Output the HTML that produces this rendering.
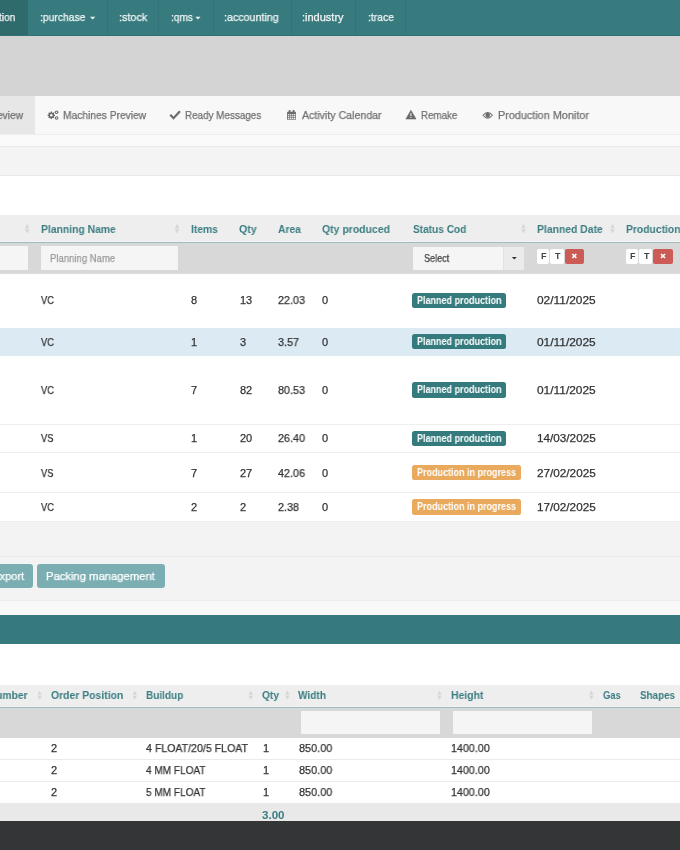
<!DOCTYPE html>
<html><head><meta charset="utf-8"><style>
html,body{margin:0;padding:0;width:680px;height:850px;overflow:hidden;background:#fff;}
.b{position:absolute;}
.t{position:absolute;font-family:"Liberation Sans",sans-serif;white-space:nowrap;will-change:transform;}
</style></head><body>
<div class=b style="left:0px;top:0px;width:680px;height:36px;background:#387b7f;"></div>
<div class=b style="left:0px;top:0px;width:28px;height:36px;background:#2f6a6d;"></div>
<div class=b style="left:107px;top:0px;width:1px;height:36px;background:#34737a;"></div>
<div class=b style="left:158.4px;top:0px;width:1px;height:36px;background:#34737a;"></div>
<div class=b style="left:212.5px;top:0px;width:1px;height:36px;background:#34737a;"></div>
<div class=b style="left:290.6px;top:0px;width:1px;height:36px;background:#34737a;"></div>
<div class=b style="left:355.3px;top:0px;width:1px;height:36px;background:#34737a;"></div>
<div class=b style="left:404.7px;top:0px;width:1px;height:36px;background:#34737a;"></div>
<div class=b style="left:0px;top:35px;width:680px;height:1px;background:#336f73;"></div>
<div class=b style="left:0px;top:36px;width:680px;height:60px;background:#d4d4d4;"></div>
<div class=b style="left:0px;top:96px;width:680px;height:38px;background:#f8f8f8;"></div>
<div class=b style="left:0px;top:96px;width:35px;height:38px;background:#e7e7e7;"></div>
<div class=b style="left:0px;top:133.5px;width:680px;height:1px;background:#eeeeee;"></div>
<div class=b style="left:0px;top:134.5px;width:680px;height:11px;background:#fafafa;"></div>
<div class=b style="left:0px;top:145.5px;width:680px;height:1px;background:#e9e9e9;"></div>
<div class=b style="left:0px;top:146.5px;width:680px;height:28px;background:#f4f4f4;"></div>
<div class=b style="left:0px;top:174.5px;width:680px;height:1px;background:#e8e8e8;"></div>
<div class=b style="left:0px;top:175.5px;width:680px;height:39.5px;background:#ffffff;"></div>
<div class=b style="left:0px;top:215px;width:680px;height:27px;background:#eeeeee;"></div>
<div class=b style="left:0px;top:241px;width:680px;height:1px;background:#f3f3f3;"></div>
<div class=b style="left:0px;top:242px;width:680px;height:1px;background:#9fbdbf;"></div>
<div class=b style="left:0px;top:243px;width:680px;height:30px;background:#d8d8d8;"></div>
<div class=b style="left:0px;top:246px;width:28px;height:24px;background:#f5f5f5;"></div>
<div class=b style="left:40.6px;top:245.6px;width:137.4px;height:24.7px;background:#f5f5f5;"></div>
<div class=b style="left:413px;top:246.5px;width:111px;height:23.5px;background:#f5f5f5;"></div>
<div class=b style="left:503px;top:246.5px;width:21px;height:23.5px;background:#ebebeb;"></div>
<div class=b style="left:502.5px;top:246.5px;width:1px;height:23.5px;background:#e2e2e2;"></div>
<div class=b style="left:537.2px;top:248.6px;width:11.8px;height:15.1px;background:#ffffff;border-radius:2px;"></div>
<div class=b style="left:550.0px;top:248.6px;width:13.5px;height:15.1px;background:#ffffff;border-radius:2px;"></div>
<div class=b style="left:564.7px;top:248.6px;width:19.5px;height:15.1px;background:#cd5b55;border-radius:2px;"></div>
<div class=b style="left:625.9px;top:248.6px;width:11.8px;height:15.1px;background:#ffffff;border-radius:2px;"></div>
<div class=b style="left:638.6999999999999px;top:248.6px;width:13.5px;height:15.1px;background:#ffffff;border-radius:2px;"></div>
<div class=b style="left:653.4px;top:248.6px;width:19.5px;height:15.1px;background:#cd5b55;border-radius:2px;"></div>
<div class=b style="left:0px;top:273px;width:680px;height:248px;background:#ffffff;"></div>
<div class=b style="left:0px;top:272.5px;width:680px;height:1px;background:#dcdcdc;"></div>
<div class=b style="left:0px;top:327.6px;width:680px;height:28.2px;background:#dbeaf3;"></div>
<div class=b style="left:0px;top:424.4px;width:680px;height:1px;background:#efefef;"></div>
<div class=b style="left:0px;top:452.2px;width:680px;height:1px;background:#efefef;"></div>
<div class=b style="left:0px;top:492.2px;width:680px;height:1px;background:#efefef;"></div>
<div class=b style="left:0px;top:521px;width:680px;height:35px;background:#f3f3f3;"></div>
<div class=b style="left:0px;top:520.5px;width:680px;height:1px;background:#ededed;"></div>
<div class=b style="left:0px;top:555.5px;width:680px;height:1px;background:#e9e9e9;"></div>
<div class=b style="left:0px;top:556.5px;width:680px;height:43.5px;background:#f3f3f3;"></div>
<div class=b style="left:0px;top:599.5px;width:680px;height:1px;background:#ececec;"></div>
<div class=b style="left:0px;top:600.5px;width:680px;height:14.5px;background:#f8f8f8;"></div>
<div class=b style="left:-10px;top:563.8px;width:43px;height:24.2px;background:#7aaeb2;border-radius:3px;"></div>
<div class=b style="left:37px;top:563.8px;width:127.5px;height:24.2px;background:#7aaeb2;border-radius:3px;"></div>
<div class=b style="left:0px;top:615px;width:680px;height:29px;background:#367a7e;"></div>
<div class=b style="left:0px;top:644px;width:680px;height:41px;background:#ffffff;"></div>
<div class=b style="left:0px;top:685px;width:680px;height:22px;background:#eeeeee;"></div>
<div class=b style="left:0px;top:705.5px;width:680px;height:1px;background:#f3f3f3;"></div>
<div class=b style="left:0px;top:706.5px;width:680px;height:1px;background:#9fbdbf;"></div>
<div class=b style="left:0px;top:707.5px;width:680px;height:30px;background:#d8d8d8;"></div>
<div class=b style="left:300.75px;top:710.5px;width:139.25px;height:23.75px;background:#f5f5f5;"></div>
<div class=b style="left:453.25px;top:710.5px;width:138.75px;height:23.75px;background:#f5f5f5;"></div>
<div class=b style="left:0px;top:737.5px;width:680px;height:65.5px;background:#ffffff;"></div>
<div class=b style="left:0px;top:759px;width:680px;height:1px;background:#ebebeb;"></div>
<div class=b style="left:0px;top:781px;width:680px;height:1px;background:#ebebeb;"></div>
<div class=b style="left:0px;top:803px;width:680px;height:18px;background:#e9e9e9;"></div>
<div class=b style="left:0px;top:821px;width:680px;height:29px;background:#333537;"></div>

<svg class=b style="left:0;top:0" width="680" height="850" viewBox="0 0 680 850">
 <!-- nav carets -->
 <path d="M90 16.8 L95.3 16.8 L92.65 19.4 Z" fill="#eef4f4"/>
 <path d="M195.3 16.8 L200.5 16.8 L197.9 19.4 Z" fill="#eef4f4"/>
 <!-- cogs -->
 <g fill="#6b6b6b">
  <circle cx="51.3" cy="115.3" r="2.9"/>
  <g stroke="#6b6b6b" stroke-width="1.3">
   <line x1="51.3" y1="111.6" x2="51.3" y2="119"/>
   <line x1="47.6" y1="115.3" x2="55" y2="115.3"/>
   <line x1="48.7" y1="112.7" x2="53.9" y2="117.9"/>
   <line x1="53.9" y1="112.7" x2="48.7" y2="117.9"/>
  </g>
  <circle cx="56.6" cy="112.3" r="1.8"/>
  <circle cx="56.6" cy="118" r="1.8"/>
 </g>
 <circle cx="51.3" cy="115.3" r="1.2" fill="#f8f8f8"/>
 <circle cx="56.6" cy="112.3" r="0.7" fill="#f8f8f8"/>
 <circle cx="56.6" cy="118" r="0.7" fill="#f8f8f8"/>
 <!-- check -->
 <path d="M171 115.6 L173.5 118.2 L179.2 112" fill="none" stroke="#6b6b6b" stroke-width="2.2" stroke-linecap="square"/>
 <!-- calendar -->
 <rect x="287.1" y="111.8" width="8.8" height="8" fill="#6b6b6b" rx="0.6"/>
 <g fill="#f8f8f8">
  <rect x="288.1" y="114.1" width="1.3" height="1.3"/><rect x="290.1" y="114.1" width="1.3" height="1.3"/><rect x="292.1" y="114.1" width="1.3" height="1.3"/><rect x="294" y="114.1" width="1.2" height="1.3"/>
  <rect x="288.1" y="116.1" width="1.3" height="1.3"/><rect x="290.1" y="116.1" width="1.3" height="1.3"/><rect x="292.1" y="116.1" width="1.3" height="1.3"/><rect x="294" y="116.1" width="1.2" height="1.3"/>
  <rect x="288.1" y="118.0" width="1.3" height="1.2"/><rect x="290.1" y="118.0" width="1.3" height="1.2"/><rect x="292.1" y="118.0" width="1.3" height="1.2"/><rect x="294" y="118.0" width="1.2" height="1.2"/>
 </g>
 <rect x="288.6" y="110.1" width="2" height="2.6" rx="0.8" fill="#6b6b6b"/>
 <rect x="292.6" y="110.1" width="2" height="2.6" rx="0.8" fill="#6b6b6b"/>
 <!-- warning -->
 <path d="M410.9 110.3 L416 119 L405.9 119 Z" fill="#6b6b6b" stroke="#6b6b6b" stroke-width="0.6" stroke-linejoin="round"/>
 <rect x="410.4" y="113.2" width="1" height="3" fill="#f8f8f8"/>
 <rect x="410.4" y="117" width="1" height="0.9" fill="#f8f8f8"/>
 <!-- eye -->
 <path d="M482.4 115.3 Q487.7 108.6 493 115.3 Q487.7 122 482.4 115.3 Z" fill="#6b6b6b"/>
 <path d="M483.7 115.3 Q487.7 110.9 491.7 115.3 Q487.7 119.7 483.7 115.3 Z" fill="#f8f8f8"/>
 <circle cx="487.7" cy="115.1" r="2.3" fill="#6b6b6b"/>
 <!-- sort icons table1 -->
 <g fill="#d6d6d6">
  <path d="M24.9 228.2 L27.2 223.9 L29.5 228.2 Z"/><path d="M24.9 229.3 L27.2 233.6 L29.5 229.3 Z"/><path d="M174.7 228.2 L177.0 223.9 L179.29999999999998 228.2 Z"/><path d="M174.7 229.3 L177.0 233.6 L179.29999999999998 229.3 Z"/><path d="M521.2 228.2 L523.5 223.9 L525.8000000000001 228.2 Z"/><path d="M521.2 229.3 L523.5 233.6 L525.8000000000001 229.3 Z"/><path d="M610.2 228.2 L612.5 223.9 L614.8000000000001 228.2 Z"/><path d="M610.2 229.3 L612.5 233.6 L614.8000000000001 229.3 Z"/>
  <path d="M37.5 694.8 L39.7 690.8 L41.9 694.8 Z"/><path d="M37.5 695.8 L39.7 699.8 L41.9 695.8 Z"/><path d="M132.6 694.8 L134.79999999999998 690.8 L137.0 694.8 Z"/><path d="M132.6 695.8 L134.79999999999998 699.8 L137.0 695.8 Z"/><path d="M248.5 694.8 L250.7 690.8 L252.9 694.8 Z"/><path d="M248.5 695.8 L250.7 699.8 L252.9 695.8 Z"/><path d="M285.1 694.8 L287.3 690.8 L289.5 694.8 Z"/><path d="M285.1 695.8 L287.3 699.8 L289.5 695.8 Z"/><path d="M437.3 694.8 L439.5 690.8 L441.7 694.8 Z"/><path d="M437.3 695.8 L439.5 699.8 L441.7 695.8 Z"/><path d="M589.1 694.8 L591.3000000000001 690.8 L593.5 694.8 Z"/><path d="M589.1 695.8 L591.3000000000001 699.8 L593.5 695.8 Z"/>
 </g>
 <!-- select caret -->
 <path d="M511.8 257 L516.8 257 L514.3 259.6 Z" fill="#333"/>
 <!-- x marks -->
 <g stroke="#fff" stroke-width="1.6">
  <line x1="572.3" y1="254" x2="576.3" y2="258"/><line x1="576.3" y1="254" x2="572.3" y2="258"/>
  <line x1="661" y1="254" x2="665" y2="258"/><line x1="665" y1="254" x2="661" y2="258"/>
 </g>
</svg>
<div class=b style="left:412.4px;top:292.7px;width:94.1px;height:15.5px;background:#357b7e;border-radius:2.5px;"></div>
<div class=t style="left:417px;top:295.90px;font-size:10px;line-height:10px;font-weight:700;color:#fff;transform:scaleX(0.9000);transform-origin:0 0;">Planned production</div>
<div class=b style="left:412.4px;top:333.8px;width:94.1px;height:15.5px;background:#357b7e;border-radius:2.5px;"></div>
<div class=t style="left:417px;top:337.00px;font-size:10px;line-height:10px;font-weight:700;color:#fff;transform:scaleX(0.9000);transform-origin:0 0;">Planned production</div>
<div class=b style="left:412.4px;top:382.2px;width:94.1px;height:15.5px;background:#357b7e;border-radius:2.5px;"></div>
<div class=t style="left:417px;top:385.40px;font-size:10px;line-height:10px;font-weight:700;color:#fff;transform:scaleX(0.9000);transform-origin:0 0;">Planned production</div>
<div class=b style="left:412.4px;top:430.5px;width:94.1px;height:15.5px;background:#357b7e;border-radius:2.5px;"></div>
<div class=t style="left:417px;top:433.70px;font-size:10px;line-height:10px;font-weight:700;color:#fff;transform:scaleX(0.9000);transform-origin:0 0;">Planned production</div>
<div class=b style="left:412.4px;top:464.9px;width:108.6px;height:15.5px;background:#e9aa5d;border-radius:2.5px;"></div>
<div class=t style="left:417px;top:468.10px;font-size:10px;line-height:10px;font-weight:700;color:#fff;transform:scaleX(0.8999);transform-origin:0 0;">Production in progress</div>
<div class=b style="left:412.4px;top:499.2px;width:108.6px;height:15.5px;background:#e9aa5d;border-radius:2.5px;"></div>
<div class=t style="left:417px;top:502.40px;font-size:10px;line-height:10px;font-weight:700;color:#fff;transform:scaleX(0.8999);transform-origin:0 0;">Production in progress</div>
<div class=t style="left:541.20px;top:251.7px;font-size:9px;line-height:9px;font-weight:700;color:#444;">F</div>
<div class=t style="left:554.80px;top:251.7px;font-size:9px;line-height:9px;font-weight:700;color:#444;">T</div>
<div class=t style="left:629.90px;top:251.7px;font-size:9px;line-height:9px;font-weight:700;color:#444;">F</div>
<div class=t style="left:643.50px;top:251.7px;font-size:9px;line-height:9px;font-weight:700;color:#444;">T</div>
<div class=t style="top:12.20px;font-size:11px;line-height:11px;font-weight:400;color:#f2f6f6;-webkit-text-stroke:0.25px currentColor;left:-38.64px;transform:scaleX(0.9300);transform-origin:100% 0;">:production</div>
<div class=t style="top:12.20px;font-size:11px;line-height:11px;font-weight:400;color:#f2f6f6;-webkit-text-stroke:0.25px currentColor;left:39.60px;transform:scaleX(0.9397);transform-origin:0 0;">:purchase</div>
<div class=t style="top:12.20px;font-size:11px;line-height:11px;font-weight:400;color:#f2f6f6;-webkit-text-stroke:0.25px currentColor;left:118.80px;transform:scaleX(0.9814);transform-origin:0 0;">:stock</div>
<div class=t style="top:12.20px;font-size:11px;line-height:11px;font-weight:400;color:#f2f6f6;-webkit-text-stroke:0.25px currentColor;left:170.60px;transform:scaleX(0.9185);transform-origin:0 0;">:qms</div>
<div class=t style="top:12.20px;font-size:11px;line-height:11px;font-weight:400;color:#f2f6f6;-webkit-text-stroke:0.25px currentColor;left:224.20px;transform:scaleX(0.9704);transform-origin:0 0;">:accounting</div>
<div class=t style="top:12.20px;font-size:11px;line-height:11px;font-weight:400;color:#f2f6f6;-webkit-text-stroke:0.25px currentColor;left:302.40px;transform:scaleX(1.0005);transform-origin:0 0;">:industry</div>
<div class=t style="top:12.20px;font-size:11px;line-height:11px;font-weight:400;color:#f2f6f6;-webkit-text-stroke:0.25px currentColor;left:367.50px;transform:scaleX(0.9413);transform-origin:0 0;">:trace</div>
<div class=t style="top:110.00px;font-size:11px;line-height:11px;font-weight:400;color:#6f6f6f;-webkit-text-stroke:0.25px currentColor;left:-15.62px;transform:scaleX(0.9300);transform-origin:100% 0;">Preview</div>
<div class=t style="top:110.00px;font-size:11px;line-height:11px;font-weight:400;color:#6f6f6f;-webkit-text-stroke:0.25px currentColor;left:62.80px;transform:scaleX(0.9309);transform-origin:0 0;">Machines Preview</div>
<div class=t style="top:110.00px;font-size:11px;line-height:11px;font-weight:400;color:#6f6f6f;-webkit-text-stroke:0.25px currentColor;left:185.40px;transform:scaleX(0.8965);transform-origin:0 0;">Ready Messages</div>
<div class=t style="top:110.00px;font-size:11px;line-height:11px;font-weight:400;color:#6f6f6f;-webkit-text-stroke:0.25px currentColor;left:301.60px;transform:scaleX(0.9643);transform-origin:0 0;">Activity Calendar</div>
<div class=t style="top:110.00px;font-size:11px;line-height:11px;font-weight:400;color:#6f6f6f;-webkit-text-stroke:0.25px currentColor;left:421.20px;transform:scaleX(0.8885);transform-origin:0 0;">Remake</div>
<div class=t style="top:110.00px;font-size:11px;line-height:11px;font-weight:400;color:#6f6f6f;-webkit-text-stroke:0.25px currentColor;left:497.50px;transform:scaleX(0.9845);transform-origin:0 0;">Production Monitor</div>
<div class=t style="top:223.50px;font-size:11px;line-height:11px;font-weight:700;color:#3b7d81;left:40.60px;transform:scaleX(0.9413);transform-origin:0 0;">Planning Name</div>
<div class=t style="top:223.50px;font-size:11px;line-height:11px;font-weight:700;color:#3b7d81;left:190.60px;transform:scaleX(0.9391);transform-origin:0 0;">Items</div>
<div class=t style="top:223.50px;font-size:11px;line-height:11px;font-weight:700;color:#3b7d81;left:239.30px;transform:scaleX(0.9649);transform-origin:0 0;">Qty</div>
<div class=t style="top:223.50px;font-size:11px;line-height:11px;font-weight:700;color:#3b7d81;left:277.60px;transform:scaleX(0.9359);transform-origin:0 0;">Area</div>
<div class=t style="top:223.50px;font-size:11px;line-height:11px;font-weight:700;color:#3b7d81;left:321.90px;transform:scaleX(0.9508);transform-origin:0 0;">Qty produced</div>
<div class=t style="top:223.50px;font-size:11px;line-height:11px;font-weight:700;color:#3b7d81;left:413.00px;transform:scaleX(0.9197);transform-origin:0 0;">Status Cod</div>
<div class=t style="top:223.50px;font-size:11px;line-height:11px;font-weight:700;color:#3b7d81;left:537.00px;transform:scaleX(0.9442);transform-origin:0 0;">Planned Date</div>
<div class=t style="top:223.50px;font-size:11px;line-height:11px;font-weight:700;color:#3b7d81;left:625.90px;transform:scaleX(0.9400);transform-origin:0 0;">Production</div>
<div class=t style="top:252.70px;font-size:11px;line-height:11px;font-weight:400;color:#9a9a9a;-webkit-text-stroke:0.25px currentColor;left:50.00px;transform:scaleX(0.8668);transform-origin:0 0;">Planning Name</div>
<div class=t style="top:252.70px;font-size:11px;line-height:11px;font-weight:400;color:#444444;-webkit-text-stroke:0.25px currentColor;left:423.50px;transform:scaleX(0.8241);transform-origin:0 0;">Select</div>
<div class=t style="top:295.45px;font-size:11px;line-height:11px;font-weight:400;color:#333333;-webkit-text-stroke:0.25px currentColor;left:41.00px;transform:scaleX(0.8500);transform-origin:0 0;">VC</div>
<div class=t style="top:295.45px;font-size:11px;line-height:11px;font-weight:400;color:#333333;-webkit-text-stroke:0.25px currentColor;left:190.75px;transform:scaleX(1.0000);transform-origin:0 0;">8</div>
<div class=t style="top:295.45px;font-size:11px;line-height:11px;font-weight:400;color:#333333;-webkit-text-stroke:0.25px currentColor;left:240.00px;transform:scaleX(1.0000);transform-origin:0 0;">13</div>
<div class=t style="top:295.45px;font-size:11px;line-height:11px;font-weight:400;color:#333333;-webkit-text-stroke:0.25px currentColor;left:278.00px;transform:scaleX(0.9800);transform-origin:0 0;">22.03</div>
<div class=t style="top:295.45px;font-size:11px;line-height:11px;font-weight:400;color:#333333;-webkit-text-stroke:0.25px currentColor;left:322.00px;transform:scaleX(1.0000);transform-origin:0 0;">0</div>
<div class=t style="top:295.45px;font-size:11px;line-height:11px;font-weight:400;color:#333333;-webkit-text-stroke:0.25px currentColor;left:536.80px;transform:scaleX(1.0820);transform-origin:0 0;">02/11/2025</div>
<div class=t style="top:336.70px;font-size:11px;line-height:11px;font-weight:400;color:#333333;-webkit-text-stroke:0.25px currentColor;left:41.00px;transform:scaleX(0.8500);transform-origin:0 0;">VC</div>
<div class=t style="top:336.70px;font-size:11px;line-height:11px;font-weight:400;color:#333333;-webkit-text-stroke:0.25px currentColor;left:190.75px;transform:scaleX(1.0000);transform-origin:0 0;">1</div>
<div class=t style="top:336.70px;font-size:11px;line-height:11px;font-weight:400;color:#333333;-webkit-text-stroke:0.25px currentColor;left:240.00px;transform:scaleX(1.0000);transform-origin:0 0;">3</div>
<div class=t style="top:336.70px;font-size:11px;line-height:11px;font-weight:400;color:#333333;-webkit-text-stroke:0.25px currentColor;left:278.00px;transform:scaleX(0.9800);transform-origin:0 0;">3.57</div>
<div class=t style="top:336.70px;font-size:11px;line-height:11px;font-weight:400;color:#333333;-webkit-text-stroke:0.25px currentColor;left:322.00px;transform:scaleX(1.0000);transform-origin:0 0;">0</div>
<div class=t style="top:336.70px;font-size:11px;line-height:11px;font-weight:400;color:#333333;-webkit-text-stroke:0.25px currentColor;left:536.80px;transform:scaleX(1.0820);transform-origin:0 0;">01/11/2025</div>
<div class=t style="top:384.90px;font-size:11px;line-height:11px;font-weight:400;color:#333333;-webkit-text-stroke:0.25px currentColor;left:41.00px;transform:scaleX(0.8500);transform-origin:0 0;">VC</div>
<div class=t style="top:384.90px;font-size:11px;line-height:11px;font-weight:400;color:#333333;-webkit-text-stroke:0.25px currentColor;left:190.75px;transform:scaleX(1.0000);transform-origin:0 0;">7</div>
<div class=t style="top:384.90px;font-size:11px;line-height:11px;font-weight:400;color:#333333;-webkit-text-stroke:0.25px currentColor;left:240.00px;transform:scaleX(1.0000);transform-origin:0 0;">82</div>
<div class=t style="top:384.90px;font-size:11px;line-height:11px;font-weight:400;color:#333333;-webkit-text-stroke:0.25px currentColor;left:278.00px;transform:scaleX(0.9800);transform-origin:0 0;">80.53</div>
<div class=t style="top:384.90px;font-size:11px;line-height:11px;font-weight:400;color:#333333;-webkit-text-stroke:0.25px currentColor;left:322.00px;transform:scaleX(1.0000);transform-origin:0 0;">0</div>
<div class=t style="top:384.90px;font-size:11px;line-height:11px;font-weight:400;color:#333333;-webkit-text-stroke:0.25px currentColor;left:536.80px;transform:scaleX(1.0820);transform-origin:0 0;">01/11/2025</div>
<div class=t style="top:433.20px;font-size:11px;line-height:11px;font-weight:400;color:#333333;-webkit-text-stroke:0.25px currentColor;left:41.00px;transform:scaleX(0.8500);transform-origin:0 0;">VS</div>
<div class=t style="top:433.20px;font-size:11px;line-height:11px;font-weight:400;color:#333333;-webkit-text-stroke:0.25px currentColor;left:190.75px;transform:scaleX(1.0000);transform-origin:0 0;">1</div>
<div class=t style="top:433.20px;font-size:11px;line-height:11px;font-weight:400;color:#333333;-webkit-text-stroke:0.25px currentColor;left:240.00px;transform:scaleX(1.0000);transform-origin:0 0;">20</div>
<div class=t style="top:433.20px;font-size:11px;line-height:11px;font-weight:400;color:#333333;-webkit-text-stroke:0.25px currentColor;left:278.00px;transform:scaleX(0.9800);transform-origin:0 0;">26.40</div>
<div class=t style="top:433.20px;font-size:11px;line-height:11px;font-weight:400;color:#333333;-webkit-text-stroke:0.25px currentColor;left:322.00px;transform:scaleX(1.0000);transform-origin:0 0;">0</div>
<div class=t style="top:433.20px;font-size:11px;line-height:11px;font-weight:400;color:#333333;-webkit-text-stroke:0.25px currentColor;left:536.80px;transform:scaleX(1.0661);transform-origin:0 0;">14/03/2025</div>
<div class=t style="top:468.20px;font-size:11px;line-height:11px;font-weight:400;color:#333333;-webkit-text-stroke:0.25px currentColor;left:41.00px;transform:scaleX(0.8500);transform-origin:0 0;">VS</div>
<div class=t style="top:468.20px;font-size:11px;line-height:11px;font-weight:400;color:#333333;-webkit-text-stroke:0.25px currentColor;left:190.75px;transform:scaleX(1.0000);transform-origin:0 0;">7</div>
<div class=t style="top:468.20px;font-size:11px;line-height:11px;font-weight:400;color:#333333;-webkit-text-stroke:0.25px currentColor;left:240.00px;transform:scaleX(1.0000);transform-origin:0 0;">27</div>
<div class=t style="top:468.20px;font-size:11px;line-height:11px;font-weight:400;color:#333333;-webkit-text-stroke:0.25px currentColor;left:278.00px;transform:scaleX(0.9800);transform-origin:0 0;">42.06</div>
<div class=t style="top:468.20px;font-size:11px;line-height:11px;font-weight:400;color:#333333;-webkit-text-stroke:0.25px currentColor;left:322.00px;transform:scaleX(1.0000);transform-origin:0 0;">0</div>
<div class=t style="top:468.20px;font-size:11px;line-height:11px;font-weight:400;color:#333333;-webkit-text-stroke:0.25px currentColor;left:536.80px;transform:scaleX(1.0661);transform-origin:0 0;">27/02/2025</div>
<div class=t style="top:502.40px;font-size:11px;line-height:11px;font-weight:400;color:#333333;-webkit-text-stroke:0.25px currentColor;left:41.00px;transform:scaleX(0.8500);transform-origin:0 0;">VC</div>
<div class=t style="top:502.40px;font-size:11px;line-height:11px;font-weight:400;color:#333333;-webkit-text-stroke:0.25px currentColor;left:190.75px;transform:scaleX(1.0000);transform-origin:0 0;">2</div>
<div class=t style="top:502.40px;font-size:11px;line-height:11px;font-weight:400;color:#333333;-webkit-text-stroke:0.25px currentColor;left:240.00px;transform:scaleX(1.0000);transform-origin:0 0;">2</div>
<div class=t style="top:502.40px;font-size:11px;line-height:11px;font-weight:400;color:#333333;-webkit-text-stroke:0.25px currentColor;left:278.00px;transform:scaleX(0.9800);transform-origin:0 0;">2.38</div>
<div class=t style="top:502.40px;font-size:11px;line-height:11px;font-weight:400;color:#333333;-webkit-text-stroke:0.25px currentColor;left:322.00px;transform:scaleX(1.0000);transform-origin:0 0;">0</div>
<div class=t style="top:502.40px;font-size:11px;line-height:11px;font-weight:400;color:#333333;-webkit-text-stroke:0.25px currentColor;left:536.80px;transform:scaleX(1.0661);transform-origin:0 0;">17/02/2025</div>
<div class=t style="top:570.80px;font-size:11.5px;line-height:11.5px;font-weight:400;color:#ffffff;-webkit-text-stroke:0.25px currentColor;left:-9.50px;transform:scaleX(0.9700);transform-origin:100% 0;">Export</div>
<div class=t style="top:570.80px;font-size:11.5px;line-height:11.5px;font-weight:400;color:#ffffff;-webkit-text-stroke:0.25px currentColor;left:46.25px;transform:scaleX(0.9777);transform-origin:0 0;">Packing management</div>
<div class=t style="top:690.40px;font-size:11px;line-height:11px;font-weight:700;color:#3b7d81;left:-46.58px;transform:scaleX(0.9400);transform-origin:100% 0;">Order Number</div>
<div class=t style="top:690.40px;font-size:11px;line-height:11px;font-weight:700;color:#3b7d81;left:50.75px;transform:scaleX(0.9456);transform-origin:0 0;">Order Position</div>
<div class=t style="top:690.40px;font-size:11px;line-height:11px;font-weight:700;color:#3b7d81;left:145.75px;transform:scaleX(0.9099);transform-origin:0 0;">Buildup</div>
<div class=t style="top:690.40px;font-size:11px;line-height:11px;font-weight:700;color:#3b7d81;left:261.75px;transform:scaleX(0.9267);transform-origin:0 0;">Qty</div>
<div class=t style="top:690.40px;font-size:11px;line-height:11px;font-weight:700;color:#3b7d81;left:298.25px;transform:scaleX(0.9194);transform-origin:0 0;">Width</div>
<div class=t style="top:690.40px;font-size:11px;line-height:11px;font-weight:700;color:#3b7d81;left:450.75px;transform:scaleX(0.9493);transform-origin:0 0;">Height</div>
<div class=t style="top:690.40px;font-size:11px;line-height:11px;font-weight:700;color:#3b7d81;left:602.75px;transform:scaleX(0.8535);transform-origin:0 0;">Gas</div>
<div class=t style="top:690.40px;font-size:11px;line-height:11px;font-weight:700;color:#3b7d81;left:640.00px;transform:scaleX(0.8942);transform-origin:0 0;">Shapes</div>
<div class=t style="top:743.20px;font-size:11px;line-height:11px;font-weight:400;color:#333333;-webkit-text-stroke:0.25px currentColor;left:50.75px;transform:scaleX(1.0000);transform-origin:0 0;">2</div>
<div class=t style="top:743.20px;font-size:11px;line-height:11px;font-weight:400;color:#333333;-webkit-text-stroke:0.25px currentColor;left:145.50px;transform:scaleX(0.9625);transform-origin:0 0;">4 FLOAT/20/5 FLOAT</div>
<div class=t style="top:743.20px;font-size:11px;line-height:11px;font-weight:400;color:#333333;-webkit-text-stroke:0.25px currentColor;left:262.50px;transform:scaleX(1.0000);transform-origin:0 0;">1</div>
<div class=t style="top:743.20px;font-size:11px;line-height:11px;font-weight:400;color:#333333;-webkit-text-stroke:0.25px currentColor;left:298.75px;transform:scaleX(0.9879);transform-origin:0 0;">850.00</div>
<div class=t style="top:743.20px;font-size:11px;line-height:11px;font-weight:400;color:#333333;-webkit-text-stroke:0.25px currentColor;left:451.25px;transform:scaleX(0.9745);transform-origin:0 0;">1400.00</div>
<div class=t style="top:764.95px;font-size:11px;line-height:11px;font-weight:400;color:#333333;-webkit-text-stroke:0.25px currentColor;left:50.75px;transform:scaleX(1.0000);transform-origin:0 0;">2</div>
<div class=t style="top:764.95px;font-size:11px;line-height:11px;font-weight:400;color:#333333;-webkit-text-stroke:0.25px currentColor;left:145.50px;transform:scaleX(0.9125);transform-origin:0 0;">4 MM FLOAT</div>
<div class=t style="top:764.95px;font-size:11px;line-height:11px;font-weight:400;color:#333333;-webkit-text-stroke:0.25px currentColor;left:262.50px;transform:scaleX(1.0000);transform-origin:0 0;">1</div>
<div class=t style="top:764.95px;font-size:11px;line-height:11px;font-weight:400;color:#333333;-webkit-text-stroke:0.25px currentColor;left:298.75px;transform:scaleX(0.9879);transform-origin:0 0;">850.00</div>
<div class=t style="top:764.95px;font-size:11px;line-height:11px;font-weight:400;color:#333333;-webkit-text-stroke:0.25px currentColor;left:451.25px;transform:scaleX(0.9745);transform-origin:0 0;">1400.00</div>
<div class=t style="top:786.95px;font-size:11px;line-height:11px;font-weight:400;color:#333333;-webkit-text-stroke:0.25px currentColor;left:50.75px;transform:scaleX(1.0000);transform-origin:0 0;">2</div>
<div class=t style="top:786.95px;font-size:11px;line-height:11px;font-weight:400;color:#333333;-webkit-text-stroke:0.25px currentColor;left:145.50px;transform:scaleX(0.9125);transform-origin:0 0;">5 MM FLOAT</div>
<div class=t style="top:786.95px;font-size:11px;line-height:11px;font-weight:400;color:#333333;-webkit-text-stroke:0.25px currentColor;left:262.50px;transform:scaleX(1.0000);transform-origin:0 0;">1</div>
<div class=t style="top:786.95px;font-size:11px;line-height:11px;font-weight:400;color:#333333;-webkit-text-stroke:0.25px currentColor;left:298.75px;transform:scaleX(0.9879);transform-origin:0 0;">850.00</div>
<div class=t style="top:786.95px;font-size:11px;line-height:11px;font-weight:400;color:#333333;-webkit-text-stroke:0.25px currentColor;left:451.25px;transform:scaleX(0.9745);transform-origin:0 0;">1400.00</div>
<div class=t style="top:809.60px;font-size:11.5px;line-height:11.5px;font-weight:700;color:#3b7d81;left:262.00px;transform:scaleX(1.0049);transform-origin:0 0;">3.00</div>
</body></html>
